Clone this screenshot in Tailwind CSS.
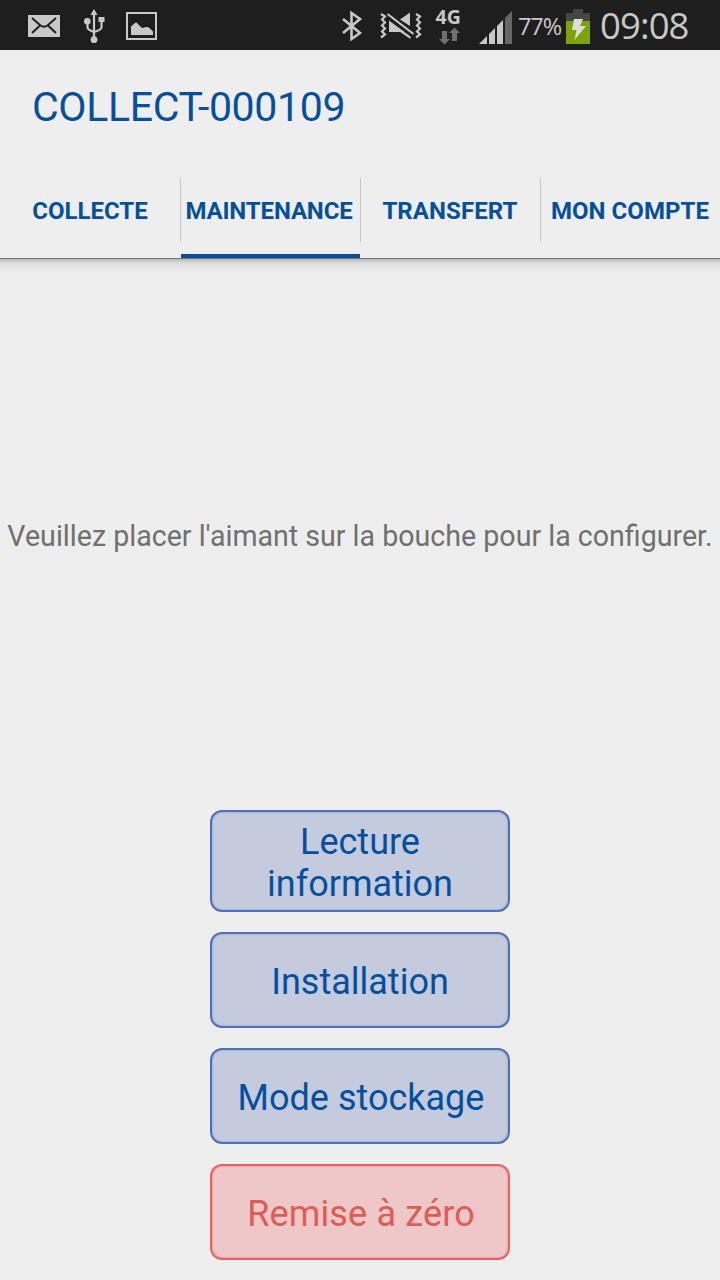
<!DOCTYPE html>
<html lang="fr">
<head>
<meta charset="utf-8">
<title>COLLECT-000109</title>
<script src="https://cdn.jsdelivr.net/npm/@tailwindcss/browser@4"></script>
</head>
<body class="bg-[#eeeeee]">
<div class="w-[720px] h-[1280px] flex flex-col overflow-hidden bg-[#eeeeee] font-['Roboto',sans-serif] text-[#0350a0]">
  <div class="h-[50px] shrink-0 bg-[#1e1e1e] flex text-[#c8c8c8]">
    <svg class="w-[170px] h-[50px]" viewBox="0 0 170 50" fill="none">
      <path fill="#c8c8c8" d="M28 15h32v22H28z"/>
      <path stroke="#1e1e1e" stroke-width="2" d="M32 18l8.500 7.500q3.500 2.500 7 0L56 18M32 33l7.500-7M56 33l-7.500-7"/>
      <g stroke="#c8c8c8" stroke-width="2.200"><path d="M94 14v24M87.500 23v4.500q0 2 6.500 4.500M101.500 20v7.500q0 2-7.500 4.500"/></g>
      <path fill="#c8c8c8" d="M94 9l3.500 6h-7zM98.500 17h6v5h-6z"/><circle cx="87.300" cy="21.300" r="3.300" fill="#c8c8c8"/><circle cx="94" cy="39.700" r="3.400" fill="#c8c8c8"/>
      <path stroke="#c8c8c8" stroke-width="2" d="M127 13h29v26h-29z"/>
      <path fill="#c8c8c8" d="M131 35v-8.500l4-3.500q1.200-1 2.500.5l4.500 4.500 4.500-1q1.500-.3 3 1l3.500 3.500V35z"/>
    </svg>
    <svg class="ml-[160px] w-[185px] h-[50px]" viewBox="330 0 185 50" fill="none">
      <path stroke="#c8c8c8" stroke-width="2.600" d="M343 19l17 14-8.500 6V13l8.500 6-17 14"/>
      <path stroke="#c8c8c8" stroke-width="2.200" d="M381 14l4 2.500-3 3 3 3-3 3 3 3-3 3 3 3-4 3M416 14l4 2.500-3 3 3 3-3 3 3 3-3 3 3 3-4 3"/>
      <path fill="#c8c8c8" d="M389 20.500L404.500 32H389zM410 12.500v13.500L400 19.500z"/>
      <path stroke="#c8c8c8" stroke-width="2.200" d="M387.500 14L413.500 34"/>
      <path fill="#c8c8c8" d="M395 28.500h4.500L410.500 36.500V39z"/>
      <text x="435.500" y="24" fill="#c8c8c8" font-family="Open Sans" font-weight="700" font-size="19.500">4G</text>
      <path fill="#707070" d="M442 31h5v8h3l-5.500 5.500L439 39h3zM452 41h5v-8h3l-5.500-5.500L449 33h3z"/>
      <path fill="#c8c8c8" d="M479 44l8-8v8zM489 44V34l6-6v16zM497 44V26l6-6v24z"/><path fill="#676767" d="M505 44V18l7-7v33z"/>
    </svg>
    <span class="w-[45px] ml-[3px] pt-[8px] text-[23.5px] leading-9 tracking-[-1.1px] font-['Open_Sans'] whitespace-nowrap">77%</span>
    <svg class="ml-[3px] w-6 h-[50px]" viewBox="0 0 24 50"><path fill="#464646" d="M0 13h7V9h10v4h7v8H0z"/><path fill="#7ba500" d="M0 21h24v23H0z"/><path fill="#ddd" d="M8 19h9l-3 7h6L8.500 40l2-10H6z"/></svg>
    <span class="ml-[10px] text-[36.500px] leading-[50px] tracking-[-0.9px] font-['Open_Sans'] whitespace-nowrap">09:08</span>
  </div>
  <header class="h-[209px] shrink-0 border-b border-[#777777] flex flex-col">
    <h1 class="h-[112px] pl-8 leading-[114px] text-[41px] tracking-[-0.34px]">COLLECT-000109</h1>
    <nav class="grid grid-cols-4 flex-1 text-[24px] font-bold text-center whitespace-nowrap">
      <div class="h-24 flex items-center justify-center pt-0.5"><span>COLLECTE</span></div>
      <div class="h-24 flex flex-col"><div class="mt-4 h-16 border-l border-[#c5c5c5] flex items-center justify-center pt-0.5 pr-[3px]"><span class="tracking-[-0.15px]">MAINTENANCE</span></div><div class="mt-3 ml-px h-1 bg-[#0350a0]"></div></div>
      <div class="mt-4 h-16 border-l border-[#c5c5c5] flex items-center justify-center pt-0.5"><span class="tracking-[0.1px] -ml-px">TRANSFERT</span></div>
      <div class="mt-4 h-16 border-l border-[#c5c5c5] flex items-center justify-center pt-0.5 pr-px"><span class="tracking-[0.06px]">MON COMPTE</span></div>
    </nav>
  </header>
  <div class="h-[14px] shrink-0 bg-linear-to-b from-[#b8b8b8] via-[#dedede] via-30% to-[#eeeeee]"></div>
  <main class="flex-1 flex flex-col">
    <p class="mt-[243px] h-10 text-center text-[28.600px] leading-10 text-[#707070] whitespace-nowrap">Veuillez placer l'aimant sur la bouche pour la configurer.</p>
    <div class="mt-[254px] flex flex-col items-center gap-5 text-[36px] leading-[42px]">
      <button class="w-[300px] h-[102px] pt-1 rounded-[12px] border-2 border-[#5070b7] bg-[#c3cbdd] shadow-[inset_0_0_1px_1px_#a3b8e2]">Lecture<br>information</button>
      <button class="w-[300px] h-24 pt-1 rounded-[12px] border-2 border-[#5070b7] bg-[#c3cbdd] shadow-[inset_0_0_1px_1px_#a3b8e2]">Installation</button>
      <button class="w-[300px] h-24 pt-1 pl-0.5 rounded-[12px] border-2 border-[#5070b7] bg-[#c3cbdd] shadow-[inset_0_0_1px_1px_#a3b8e2]">Mode stockage</button>
      <button class="w-[300px] h-24 pt-1 pl-0.5 rounded-[12px] border-2 border-[#f05f62] bg-[#eec7c8] shadow-[inset_0_0_1px_1px_#f5a5a5] text-[#e05b52] tracking-[0.15px]">Remise à zéro</button>
    </div>
  </main>
</div>
</body>
</html>
